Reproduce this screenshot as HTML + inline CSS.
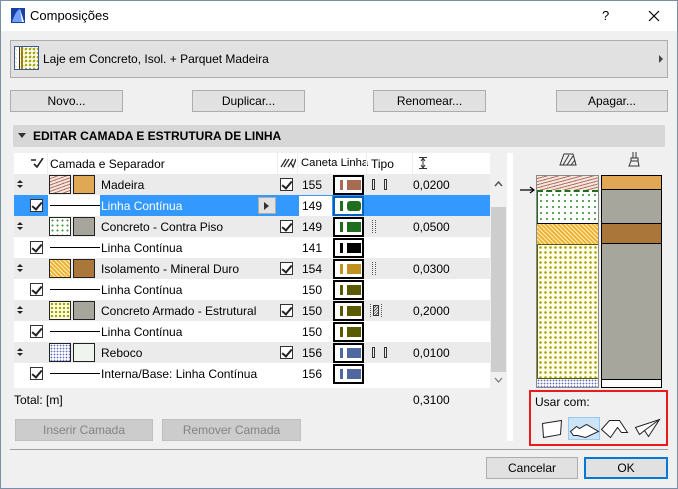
<!DOCTYPE html>
<html><head><meta charset="utf-8"><style>
*{box-sizing:border-box;margin:0;padding:0}
body{width:678px;height:489px;overflow:hidden;background:#f0f0f0;font-family:"Liberation Sans",sans-serif;font-size:12px;color:#000;position:relative}
.a{position:absolute}
.btn{position:absolute;background:#e1e1e1;border:1px solid #adadad;text-align:center;line-height:20px;height:22px}
.row{position:absolute;left:14px;width:476px;height:21px}
.g{background:#ebebeb}
.w{background:#fff}
.t{position:absolute;top:4px;white-space:nowrap}
.cb{position:absolute;width:13px;height:13px;border:1px solid #333;background:#fff;top:4px}
.cb:after{content:"";position:absolute;left:3px;top:0px;width:4px;height:8px;border:solid #222;border-width:0 2px 2px 0;transform:rotate(40deg)}
.ln{position:absolute;top:10px;height:1px;background:#000;left:36px;width:50px}
.sw{position:absolute;top:1px;width:22px;height:19px;border:1px solid #222}
.lb{position:absolute;left:319px;top:1px;width:31px;height:20px;border:2px solid #000;background:#fff}
.lb i{position:absolute;left:5px;top:3px;width:3px;height:10px}
.lb b{position:absolute;left:12px;top:3px;width:14px;height:10px}
.ud{position:absolute;left:2px;top:6px;width:8px}
.ud:before{content:"";position:absolute;left:1px;top:0;border:3px solid transparent;border-bottom:3px solid #222;border-top:0}
.ud:after{content:"";position:absolute;left:1px;top:5px;border:3px solid transparent;border-top:3px solid #222;border-bottom:0}
.sep{position:absolute;top:0;width:1px;height:21px;background:#eee}
</style></head><body>
<div class="a" style="left:0;top:0;width:678px;height:489px;border:1px solid #7a8ea8"></div>
<div class="a" style="left:1px;top:1px;width:676px;height:30px;background:#fff"></div>
<svg class="a" style="left:11px;top:8px" width="14" height="15"><rect x="0" y="0" width="14" height="15" fill="#1a3fa0"/><path d="M1 14 Q5 2 9 1 L13 14Z" fill="#6fa0ff"/><path d="M9 1 L13 14 L11 14Z" fill="#fff"/></svg>
<div class="a" style="left:30px;top:8px;font-size:13px">Composições</div>
<div class="a" style="left:602px;top:8px;font-size:13px">?</div>
<svg class="a" style="left:648px;top:10px" width="12" height="12"><path d="M1 1L11 11M11 1L1 11" stroke="#000" stroke-width="1.2"/></svg>

<div class="a" style="left:10px;top:40px;width:658px;height:38px;background:#e1e1e1;border:1px solid #adadad"></div>
<div class="a" style="left:14px;top:46px;width:25px;height:24px;border:1px solid #3a5a9a;background:repeating-linear-gradient(45deg,#fff 0 2px,#e0e090 2px 3px)">
<div class="a" style="left:2px;top:0;width:3px;height:22px;background:#fff;border-right:1px solid #333"></div>
<div class="a" style="left:6px;top:0;width:2px;height:22px;background:#a08000"></div>
<div class="a" style="left:9px;top:0;width:14px;height:22px;background:radial-gradient(#a0a000 1px,transparent 1.3px) 0 0/4px 4px"></div></div>
<div class="a" style="left:43px;top:52px">Laje em Concreto, Isol. + Parquet Madeira</div>
<svg class="a" style="left:658px;top:55px" width="6" height="8"><path d="M1 0L5 4L1 8Z" fill="#444"/></svg>

<div class="btn" style="left:10px;top:90px;width:113px">Novo...</div>
<div class="btn" style="left:192px;top:90px;width:113px">Duplicar...</div>
<div class="btn" style="left:373px;top:90px;width:113px">Renomear...</div>
<div class="btn" style="left:556px;top:90px;width:112px">Apagar...</div>

<div class="a" style="left:13px;top:125px;width:652px;height:22px;background:#d7d7d7;border-radius:2px"></div>
<svg class="a" style="left:18px;top:133px" width="8" height="6"><path d="M0 0L8 0L4 5Z" fill="#333"/></svg>
<div class="a" style="left:33px;top:129px;font-weight:bold">EDITAR CAMADA E ESTRUTURA DE LINHA</div>

<div class="a" style="left:14px;top:153px;width:499px;height:288px;background:#f0f0f0"></div>
<div class="a" style="left:507px;top:153px;width:6px;height:288px;background:#fff"></div>
<div class="a" style="left:14px;top:153px;width:476px;height:235px;background:#fff"></div>
<div class="row w" style="top:153px">
 <svg class="a" style="left:17px;top:5px" width="14" height="10"><path d="M0 2H5M3 6L6 9L12 0" stroke="#222" stroke-width="1.6" fill="none"/></svg>
 <div class="t" style="left:36px">Camada e Separador</div>
 <svg class="a" style="left:266px;top:5px" width="16" height="11"><path d="M1 9L6 1M4 9L9 1M8 9L13 1M11 5L13 9L16 1" stroke="#333" stroke-width="1.3" fill="none"/></svg>
 <div class="t" style="left:287px;font-size:11.3px">Caneta Linha</div>
 <div class="t" style="left:357px">Tipo</div>
 <svg class="a" style="left:405px;top:4px" width="8" height="12"><path d="M0 0.5H8M0 11.5H8M4 1V11M2 4L4 1L6 4M2 8L4 11L6 8" stroke="#333" fill="none"/></svg>
 <div class="sep" style="left:33px"></div><div class="sep" style="left:263px"></div><div class="sep" style="left:283px"></div><div class="sep" style="left:352px"></div><div class="sep" style="left:398px"></div>
</div>

<div class="row g" style="top:174px">
 <div class="ud"></div>
 <div class="sw" style="left:35px;background:repeating-linear-gradient(160deg,#f6e6e0 0 2px,#b07060 2px 3px)"></div>
 <div class="sw" style="left:59px;background:#e0a854"></div>
 <div class="t" style="left:87px">Madeira</div>
 <div class="cb" style="left:266px"></div>
 <div class="t" style="left:288px">155</div>
 <div class="lb"><i style="background:#a86a50"></i><b style="background:#a86a50"></b></div>
 <div class="a" style="left:358px;top:5px;width:3px;height:11px;border:1px solid #333"></div><div class="a" style="left:370px;top:5px;width:3px;height:11px;border:1px solid #333"></div>
 <div class="t" style="left:399px">0,0200</div>
</div>
<div class="row" style="top:195px;background:#3399ff">
 <div class="cb" style="left:16px"></div>
 <div class="a" style="left:34px;top:0;width:52px;height:21px;background:#fff"></div>
 <div class="ln"></div>
 <div class="t" style="left:87px;color:#fff">Linha Contínua</div>
 <div class="a" style="left:244px;top:2px;width:18px;height:17px;background:#e1e1e1;border:1px solid #adadad"></div>
 <svg class="a" style="left:250px;top:7px" width="6" height="8"><path d="M0 0L5 4L0 8Z" fill="#333"/></svg>
 <div class="a" style="left:285px;top:1px;width:33px;height:20px;background:#fff"></div>
 <div class="t" style="left:288px">149</div>
 <div class="lb" style="border-color:#0060c0"><i style="background:#1e6e1e"></i><b style="background:#1e6e1e;border-radius:3px"></b></div>
</div>
<div class="row g" style="top:216px">
 <div class="ud"></div>
 <div class="sw" style="left:35px;background:radial-gradient(#3a9a3a 0.8px,transparent 1.2px) 0 0/5px 5px,#fff"></div>
 <div class="sw" style="left:59px;background:#a6a69c"></div>
 <div class="t" style="left:87px">Concreto - Contra Piso</div>
 <div class="cb" style="left:266px"></div>
 <div class="t" style="left:288px">149</div>
 <div class="lb"><i style="background:#1e6e1e"></i><b style="background:#1e6e1e"></b></div>
 <div class="a" style="left:358px;top:4px;width:4px;height:13px;border-left:1px dotted #555;border-right:1px dotted #555"></div>
 <div class="t" style="left:399px">0,0500</div>
</div>
<div class="row w" style="top:237px">
 <div class="cb" style="left:16px"></div><div class="ln"></div>
 <div class="t" style="left:87px">Linha Contínua</div>
 <div class="t" style="left:288px">141</div>
 <div class="lb"><i style="background:#000"></i><b style="background:#000"></b></div>
</div>
<div class="row g" style="top:258px">
 <div class="ud"></div>
 <div class="sw" style="left:35px;background:repeating-linear-gradient(45deg,#fff0c0 0 1px,#f0b030 1px 3px)"></div>
 <div class="sw" style="left:59px;background:#aa763a"></div>
 <div class="t" style="left:87px">Isolamento - Mineral Duro</div>
 <div class="cb" style="left:266px"></div>
 <div class="t" style="left:288px">154</div>
 <div class="lb"><i style="background:#c09020"></i><b style="background:#c09020"></b></div>
 <div class="a" style="left:358px;top:4px;width:4px;height:13px;border-left:1px dotted #555;border-right:1px dotted #555"></div>
 <div class="t" style="left:399px">0,0300</div>
</div>
<div class="row w" style="top:279px">
 <div class="cb" style="left:16px"></div><div class="ln"></div>
 <div class="t" style="left:87px">Linha Contínua</div>
 <div class="t" style="left:288px">150</div>
 <div class="lb"><i style="background:#5a5a00"></i><b style="background:#5a5a00"></b></div>
</div>
<div class="row g" style="top:300px">
 <div class="ud"></div>
 <div class="sw" style="left:35px;background:radial-gradient(#a0a000 1px,transparent 1.4px) 0 0/4px 4px,#fffde0"></div>
 <div class="sw" style="left:59px;background:#a6a69c"></div>
 <div class="t" style="left:87px">Concreto Armado - Estrutural</div>
 <div class="cb" style="left:266px"></div>
 <div class="t" style="left:288px">150</div>
 <div class="lb"><i style="background:#5a5a00"></i><b style="background:#5a5a00"></b></div>
 <div class="a" style="left:356px;top:4px;width:12px;height:13px;border-left:1px dotted #555;border-right:1px dotted #555"></div>
 <div class="a" style="left:359px;top:5px;width:6px;height:11px;border:1px solid #333;background:repeating-linear-gradient(135deg,#fff 0 1px,#555 1px 2px)"></div>
 <div class="t" style="left:399px">0,2000</div>
</div>
<div class="row w" style="top:321px">
 <div class="cb" style="left:16px"></div><div class="ln"></div>
 <div class="t" style="left:87px">Linha Contínua</div>
 <div class="t" style="left:288px">150</div>
 <div class="lb"><i style="background:#5a5a00"></i><b style="background:#5a5a00"></b></div>
</div>
<div class="row g" style="top:342px">
 <div class="ud"></div>
 <div class="sw" style="left:35px;background:radial-gradient(#6070c0 0.7px,transparent 1px) 0 0/3px 3px,#fff"></div>
 <div class="sw" style="left:59px;background:#f0f4ee"></div>
 <div class="t" style="left:87px">Reboco</div>
 <div class="cb" style="left:266px"></div>
 <div class="t" style="left:288px">156</div>
 <div class="lb"><i style="background:#5068a0"></i><b style="background:#5068a0"></b></div>
 <div class="a" style="left:358px;top:5px;width:3px;height:11px;border:1px solid #333"></div><div class="a" style="left:370px;top:5px;width:3px;height:11px;border:1px solid #333"></div>
 <div class="t" style="left:399px">0,0100</div>
</div>
<div class="row w" style="top:363px">
 <div class="cb" style="left:16px"></div><div class="ln"></div>
 <div class="t" style="left:87px">Interna/Base: Linha Contínua</div>
 <div class="t" style="left:288px">156</div>
 <div class="lb"><i style="background:#5068a0"></i><b style="background:#5068a0"></b></div>
</div>
<div class="a" style="left:490px;top:174px;width:17px;height:214px;background:#f0f0f0"></div>
<div class="a" style="left:491px;top:207px;width:15px;height:165px;background:#cdcdcd"></div>
<svg class="a" style="left:494px;top:181px" width="9" height="6"><path d="M1 5L4.5 1L8 5" stroke="#555" stroke-width="1.5" fill="none"/></svg>
<svg class="a" style="left:494px;top:377px" width="9" height="6"><path d="M1 1L4.5 5L8 1" stroke="#777" stroke-width="1.2" fill="none"/></svg>

<div class="a" style="left:14px;top:393px">Total: [m]</div>
<div class="a" style="left:413px;top:393px">0,3100</div>
<div class="btn" style="left:15px;top:419px;width:138px;color:#838383;background:#cccccc;border-color:#bfbfbf">Inserir Camada</div>
<div class="btn" style="left:162px;top:419px;width:139px;color:#838383;background:#cccccc;border-color:#bfbfbf">Remover Camada</div>

<svg class="a" style="left:559px;top:152px" width="18" height="14"><path d="M1 13L5 2H14L17 13Z" fill="none" stroke="#333"/><path d="M4 13L10 3M8 13L14 4M12 13L16 8" stroke="#333"/></svg>
<svg class="a" style="left:628px;top:151px" width="12" height="16"><path d="M5 1V7M8 1V7" stroke="#333"/><rect x="3" y="7" width="7" height="3" fill="none" stroke="#333"/><path d="M3 10L1 15H11L10 10" fill="none" stroke="#333"/></svg>
<div class="a" style="left:536px;top:175px;width:63px;height:213px;border:1px solid #888;background:#fff"></div>
<div class="a" style="left:537px;top:176px;width:61px;height:14px;background:repeating-linear-gradient(165deg,#f6e6e0 0 2px,#b07060 2px 3px)"></div>
<div class="a" style="left:537px;top:190px;width:61px;height:33px;background:radial-gradient(#3a9a3a 0.8px,transparent 1.2px) 0 0/6px 6px,#fff;border-top:2px dashed #1e6e1e;border-left:1px solid #1e6e1e"></div>
<div class="a" style="left:537px;top:223px;width:61px;height:21px;background:repeating-linear-gradient(45deg,#fff0c0 0 1px,#f0b030 1px 3px);border-top:1px solid #000"></div>
<div class="a" style="left:537px;top:244px;width:61px;height:135px;background:radial-gradient(#a0a000 1px,transparent 1.5px) 0 0/5px 5px,#fffde8;border-top:1px solid #5a5a00;border-left:1px solid #5a5a00;border-bottom:1px solid #5a5a00"></div>
<div class="a" style="left:537px;top:379px;width:61px;height:8px;background:radial-gradient(#6070c0 0.7px,transparent 1px) 0 0/3px 3px,#fff"></div>
<div class="a" style="left:601px;top:175px;width:61px;height:213px;border:1px solid #000;background:#a6a69c"></div>
<div class="a" style="left:602px;top:176px;width:59px;height:14px;background:#e0a854;border-bottom:1px solid #000"></div>
<div class="a" style="left:602px;top:223px;width:59px;height:21px;background:#aa763a;border-top:1px solid #000;border-bottom:1px solid #000"></div>
<div class="a" style="left:602px;top:379px;width:59px;height:8px;background:#fff;border-top:1px solid #000"></div>
<svg class="a" style="left:520px;top:186px" width="16" height="8"><path d="M0 4H14M10 1L14 4L10 7" stroke="#000" stroke-width="1.2" fill="none"/></svg>

<div class="a" style="left:529px;top:390px;width:139px;height:56px;border:2px solid #e81c1c"></div>
<div class="a" style="left:535px;top:395px">Usar com:</div>
<div class="a" style="left:568px;top:417px;width:32px;height:23px;background:#cce4f7;border:1px solid #99c9ef"></div>
<svg class="a" style="left:535px;top:414px" width="130" height="28"><g fill="#fff" stroke="#222" stroke-width="1"><path d="M7.5 9.5L26.5 6.5L25.5 20.5L8.5 23.5Z"/><path d="M35.5 17.5L41.5 12.5L44.5 14.5L51.5 10.5L63.5 17.5L50.5 23.5L42.5 21.5L38.5 21.5Z"/><path d="M66.5 15.5L74.5 6.5L84.5 6.5L92.5 18.5L86.5 18.5L82.5 13.5L75.5 23.5Z"/><path d="M100.5 13.5L124.5 5.5L113.5 22.5L109.5 16.5L104.5 20.5Z"/><path d="M109.5 16.5L124.5 5.5"/></g></svg>

<div class="a" style="left:10px;top:449px;width:658px;height:1px;background:#a0a0a0"></div>
<div class="btn" style="left:486px;top:457px;width:92px">Cancelar</div>
<div class="btn" style="left:584px;top:457px;width:84px;border:2px solid #0078d7;line-height:18px">OK</div>
</body></html>
